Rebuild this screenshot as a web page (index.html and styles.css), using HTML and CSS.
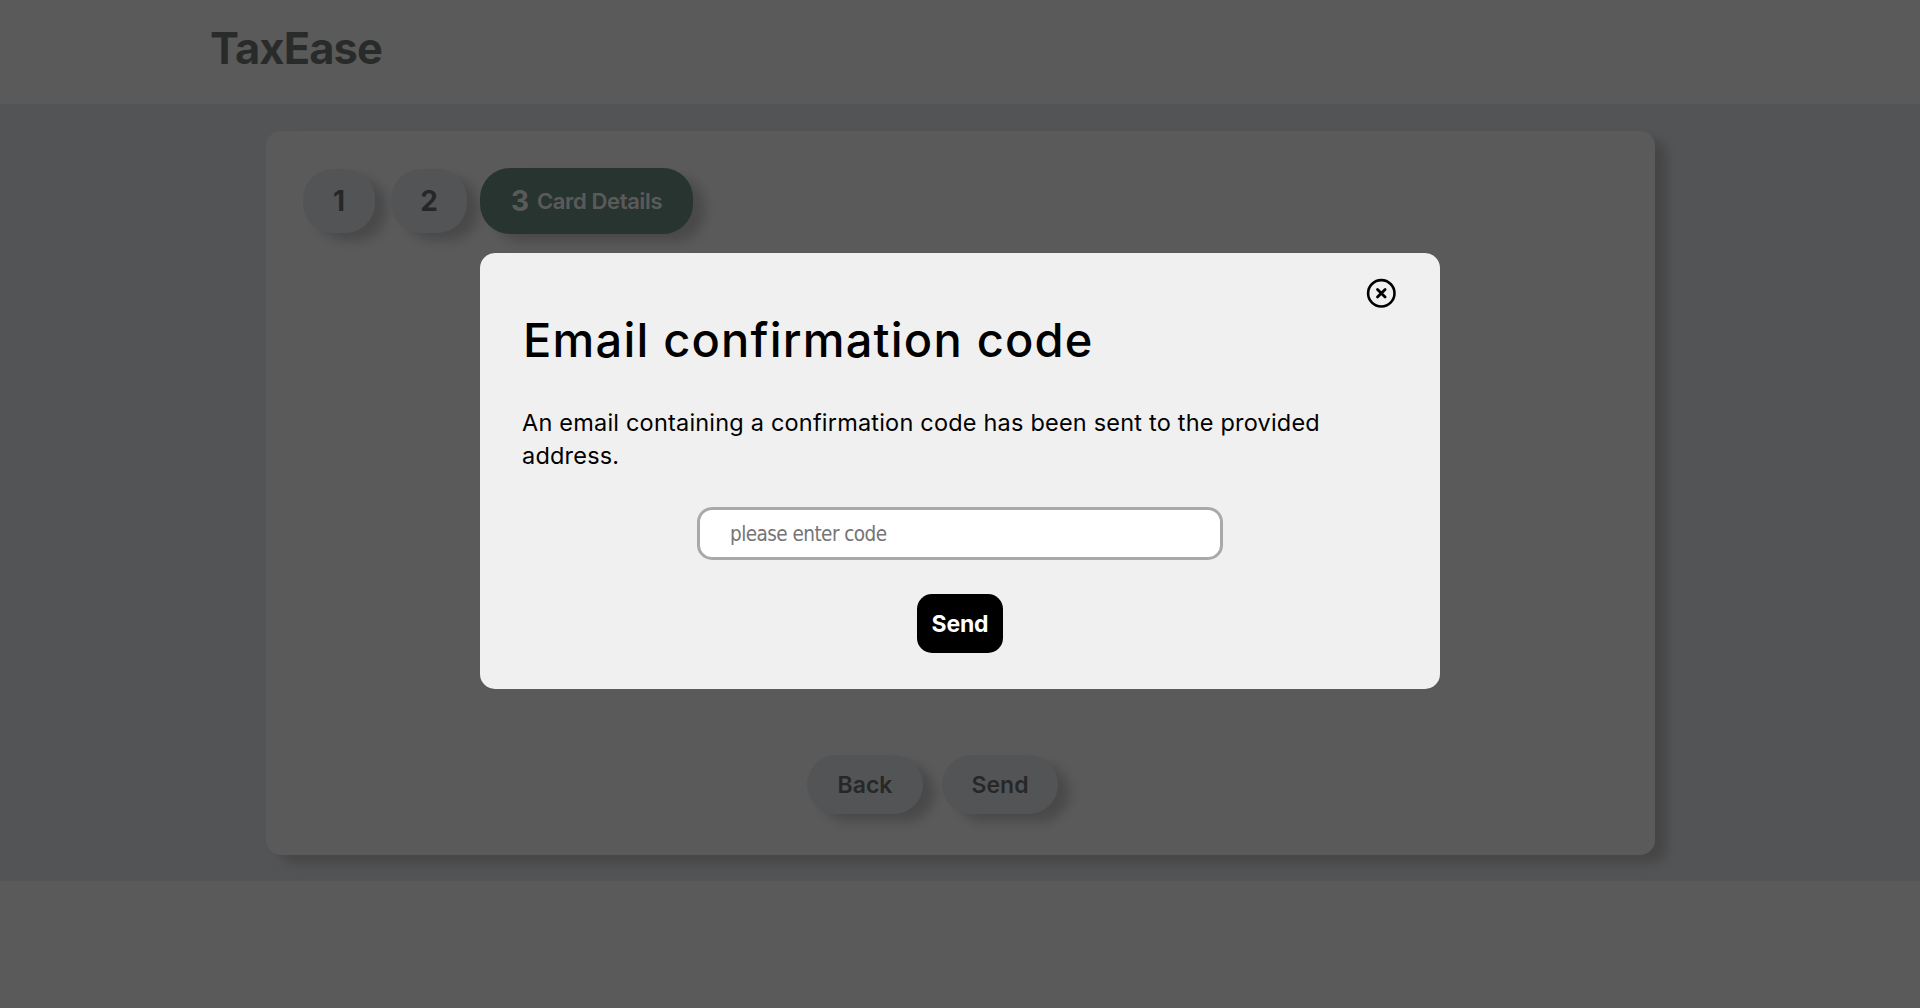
FILE: index.html
```html
<!DOCTYPE html>
<html lang="en">
<head>
<meta charset="utf-8">
<title>TaxEase</title>
<link rel="stylesheet" href="styles.css">
</head>
<body>
<header class="header"><span class="logo">TaxEase</span></header>
<main class="main">
  <section class="card">
    <nav class="steps">
      <div class="pill step step-one"><b>1</b></div>
      <div class="pill step step-two"><b>2</b></div>
      <div class="pill step active"><b>3</b><span class="step-label">Card Details</span></div>
    </nav>
    <div class="actions">
      <button class="pill action">Back</button>
      <button class="pill action">Send</button>
    </div>
  </section>
</main>
<div class="overlay">
  <div class="modal">
    <button class="close" aria-label="Close">
      <svg viewBox="0 0 30 30" width="30" height="30" fill="none" stroke="#000"><circle cx="15.3" cy="15.3" r="13.2" stroke-width="2.6"/><path d="M11.5 11.5l7.6 7.6M19.1 11.5l-7.6 7.6" stroke-width="2.8" stroke-linecap="round"/></svg>
    </button>
    <h1 class="title">Email confirmation code</h1>
    <p class="message">An email containing a confirmation code has been sent to the provided address.</p>
    <input class="code" type="text" placeholder="please enter code">
    <button class="send">Send</button>
  </div>
</div>
</body>
</html>
```
FILE: styles.css
```css
* { box-sizing: border-box; }
body { margin: 0; height: 1008px; overflow: hidden; background: #fff; font-family: Inter, "Liberation Sans", sans-serif; color: #000; }
button { border: 0; font-family: inherit; color: inherit; padding: 0; }
.header { height: 104px; padding: 22px 210px; }
.logo { font-size: 43.5px; line-height: 53px; font-weight: 650; letter-spacing: -0.9px; color: #0e1813; }
.main { height: 777px; padding: 27px 265px 26px 266px; background: #dbe0ea; }
.card { height: 724px; padding: 37px; display: flex; flex-direction: column; justify-content: space-between; background: #fff; border-radius: 15px; box-shadow: 12px 8px 12px #999; }
.steps { display: flex; align-items: center; }
.pill { display: flex; align-items: center; justify-content: center; border-radius: 30px; background: #dbe0ea; box-shadow: 12px 8px 12px #aaa; }
.step { height: 64px; font-size: 28px; }
.step b { font-weight: 650; }
.step-one { width: 72px; margin-right: 16px; }
.step-two { width: 76px; margin-right: 13px; }
.active { width: 213px; height: 66px; background: #044031; color: #fff; gap: 8px; }
.step-label { font-size: 22px; font-weight: 620; letter-spacing: -0.35px; }
.actions { display: flex; justify-content: center; gap: 19px; padding: 0 56px 4px 0; }
.action { width: 116px; height: 59px; font-size: 23px; font-weight: 620; }
.overlay { position: fixed; inset: 0; padding-top: 253px; background: rgba(49,49,49,.8); }
.modal { position: relative; display: flex; flex-direction: column; align-items: center; width: 960px; height: 436px; margin: 0 auto; padding: 59px 42px 0; border-radius: 15px; background: #f0f0f0; }
.close { position: absolute; top: 25px; right: 44px; width: 30px; height: 30px; background: none; }
.close svg { display: block; }
.title { align-self: stretch; margin: 0; padding-left: 1px; font-size: 47px; line-height: 56px; font-weight: 470; letter-spacing: 1.2px; }
.message { align-self: stretch; margin: 38px 0 0; font-size: 23.5px; line-height: 33px; letter-spacing: 0.2px; }
.code { width: 526px; height: 53px; margin: 35px 0 34px; padding: 0 30px; border: 3px solid #a9a9a9; border-radius: 15px; font: 20.5px "DejaVu Sans Condensed", "DejaVu Sans", sans-serif; font-stretch: condensed; letter-spacing: -0.55px; }
.send { width: 86px; height: 59px; border-radius: 15px; background: #000; color: #fff; font-size: 23px; font-weight: 650; letter-spacing: -0.2px; }
```
